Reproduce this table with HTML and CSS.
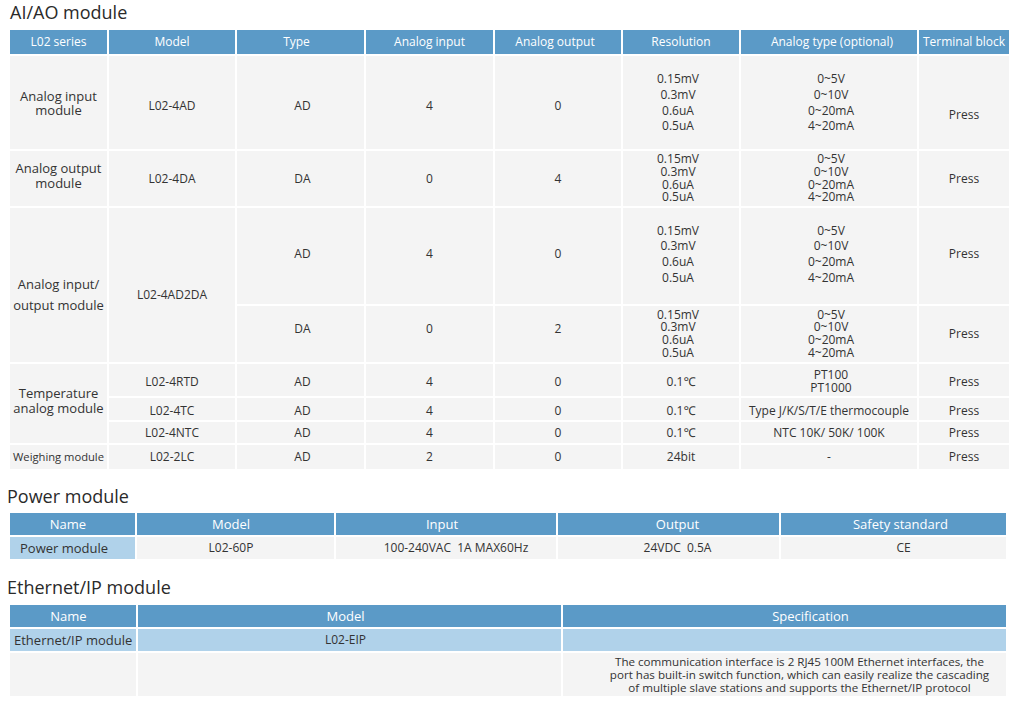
FILE: index.html
```html
<!DOCTYPE html>
<html lang="en">
<head>
<meta charset="utf-8">
<title>Modules</title>
<link rel="stylesheet" href="styles.css">
</head>
<body>
<h2 class="title first">AI/AO module</h2>
<table class="grid aio">
  <colgroup>
    <col class="c1"><col class="c2"><col class="c3"><col class="c4"><col class="c5"><col class="c6"><col class="c7"><col class="c8">
  </colgroup>
  <tr class="hd">
    <th>L02 series</th><th>Model</th><th class="sl3">Type</th><th>Analog input</th><th class="sl2">Analog output</th><th>Resolution</th><th class="sr3">Analog type (optional)</th><th>Terminal block</th>
  </tr>
  <tr class="r1">
    <td class="name lh14">Analog input<br>module</td>
    <td>L02-4AD</td><td class="sr2">AD</td><td>4</td><td>0</td>
    <td class="lines wide sl2"><div class="ln">0.15mV</div><div class="ln">0.3mV</div><div class="ln">0.6uA</div><div class="ln">0.5uA</div></td>
    <td class="lines wide sr2"><div class="ln">0~5V</div><div class="ln">0~10V</div><div class="ln">0~20mA</div><div class="ln">4~20mA</div></td>
    <td class="press">Press</td>
  </tr>
  <tr class="r2">
    <td class="name lh15">Analog output<br>module</td>
    <td>L02-4DA</td><td class="sr2">DA</td><td>0</td><td>4</td>
    <td class="lines tight sl2"><div class="ln">0.15mV</div><div class="ln">0.3mV</div><div class="ln">0.6uA</div><div class="ln">0.5uA</div></td>
    <td class="lines tight sr2"><div class="ln">0~5V</div><div class="ln">0~10V</div><div class="ln">0~20mA</div><div class="ln">4~20mA</div></td>
    <td>Press</td>
  </tr>
  <tr class="r3">
    <td class="name lh21 low" rowspan="2">Analog input/<br>output module</td>
    <td class="low" rowspan="2">L02-4AD2DA</td>
    <td class="sr2">AD</td><td>4</td><td>0</td>
    <td class="lines wide sl2"><div class="ln">0.15mV</div><div class="ln">0.3mV</div><div class="ln">0.6uA</div><div class="ln">0.5uA</div></td>
    <td class="lines wide sr2"><div class="ln">0~5V</div><div class="ln">0~10V</div><div class="ln">0~20mA</div><div class="ln">4~20mA</div></td>
    <td>Press</td>
  </tr>
  <tr class="r4">
    <td class="up sr2">DA</td><td class="up">0</td><td class="up">2</td>
    <td class="lines tight sl2"><div class="ln">0.15mV</div><div class="ln">0.3mV</div><div class="ln">0.6uA</div><div class="ln">0.5uA</div></td>
    <td class="lines tight sr2"><div class="ln">0~5V</div><div class="ln">0~10V</div><div class="ln">0~20mA</div><div class="ln">4~20mA</div></td>
    <td>Press</td>
  </tr>
  <tr class="r5">
    <td class="name lh15" rowspan="3">Temperature<br>analog module</td>
    <td>L02-4RTD</td><td class="sr2">AD</td><td>4</td><td>0</td><td>0.1℃</td>
    <td class="lines tight sr2"><div class="ln">PT100</div><div class="ln">PT1000</div></td>
    <td>Press</td>
  </tr>
  <tr class="r6">
    <td>L02-4TC</td><td class="sr2">AD</td><td>4</td><td>0</td><td>0.1℃</td><td>Type J/K/S/T/E thermocouple</td><td>Press</td>
  </tr>
  <tr class="r7">
    <td>L02-4NTC</td><td class="sr2">AD</td><td>4</td><td>0</td><td>0.1℃</td><td>NTC 10K/ 50K/ 100K</td><td>Press</td>
  </tr>
  <tr class="r8">
    <td class="name small">Weighing module</td>
    <td>L02-2LC</td><td class="sr2">AD</td><td>2</td><td>0</td><td>24bit</td><td>-</td><td>Press</td>
  </tr>
</table>

<h2 class="title section">Power module</h2>
<table class="grid power">
  <colgroup>
    <col class="p1"><col class="p2"><col class="p3"><col class="p4"><col class="p5">
  </colgroup>
  <tr class="hd2">
    <th class="sl4">Name</th><th class="sl4">Model</th><th class="sl3">Input</th><th class="sr9">Output</th><th class="sr7">Safety standard</th>
  </tr>
  <tr class="pr">
    <td class="lb left">Power module</td>
    <td class="sl4">L02-60P</td>
    <td class="sr10">100-240VAC&nbsp; 1A MAX60Hz</td>
    <td class="sr9">24VDC&nbsp; 0.5A</td>
    <td class="sr10">CE</td>
  </tr>
</table>

<h2 class="title section eth">Ethernet/IP module</h2>
<table class="grid ethernet">
  <colgroup>
    <col class="e1"><col class="e2"><col class="e3">
  </colgroup>
  <tr class="hd2">
    <th class="sl4">Name</th><th class="sl3">Model</th><th class="specth">Specification</th>
  </tr>
  <tr class="er">
    <td class="lb left tightleft">Ethernet/IP module</td>
    <td class="lb sl3">L02-EIP</td>
    <td class="lb"></td>
  </tr>
  <tr class="er2">
    <td></td>
    <td></td>
    <td class="spec"><div class="sl">The communication interface is 2 RJ45 100M Ethernet interfaces, the</div><div class="sl">port has built-in switch function, which can easily realize the cascading</div><div class="sl">of multiple slave stations and supports the Ethernet/IP protocol</div></td>
  </tr>
</table>
</body>
</html>
```

FILE: styles.css
```css
body {
  margin: 0;
  padding: 3px 0 0 8px;
  background: #ffffff;
  color: #333333;
  font-family: "Open Sans", "Noto Sans", "Noto Sans CJK SC", sans-serif;
}

.title {
  margin: 0;
  font-size: 18px;
  font-weight: 400;
  line-height: 19px;
  color: #2a2a2a;
}

.title.first {
  margin-left: 2px;
  margin-bottom: 6px;
}

.title.section {
  margin-top: 16px;
  margin-bottom: 5px;
  margin-left: -1px;
}

.title.eth {
  margin-top: 17px;
  margin-bottom: 6px;
}

.grid {
  border-collapse: collapse;
  table-layout: fixed;
}

.grid th,
.grid td {
  border: 2px solid #ffffff;
  padding: 0 2px;
  text-align: center;
  vertical-align: middle;
  font-weight: 400;
  white-space: nowrap;
  overflow: hidden;
}

.grid th {
  background: #5b9ac7;
  color: #ffffff;
}

.grid td {
  background: #f4f4f4;
  color: #333333;
}

/* horizontal nudges: shift text left (sl) or right (sr) */
.grid .sl2 { padding-left: 0; padding-right: 6px; }
.grid .sl3 { padding-left: 0; padding-right: 8px; }
.grid .sl4 { padding-left: 0; padding-right: 9px; }
.grid .sr2 { padding-left: 6px; padding-right: 2px; }
.grid .sr3 { padding-left: 8px; padding-right: 2px; }
.grid .sr7 { padding-left: 16px; padding-right: 2px; }
.grid .sr9 { padding-left: 20px; padding-right: 2px; }
.grid .sr10 { padding-left: 22px; padding-right: 2px; }

/* AI/AO table */
.aio {
  width: 1001px;
  font-size: 12px;
  line-height: 14px;
}

.aio .c1 { width: 99px; }
.aio .c2 { width: 128px; }
.aio .c3 { width: 129px; }
.aio .c4 { width: 129px; }
.aio .c5 { width: 128px; }
.aio .c6 { width: 118px; }
.aio .c7 { width: 178px; }
.aio .c8 { width: 92px; }

.aio th {
  font-size: 12px;
}

.aio .hd { height: 26px; }
.aio .r1 { height: 95px; }
.aio .r2 { height: 57px; }
.aio .r3 { height: 98px; }
.aio .r4 { height: 58px; }
.aio .r5 { height: 34px; }
.aio .r6 { height: 24px; }
.aio .r7 { height: 23px; }
.aio .r8 { height: 26px; }

.aio .name {
  font-size: 13px;
  padding: 0;
}

.aio .name.small {
  font-size: 11.2px;
}

.lh14 { line-height: 14px; }
.lh15 { line-height: 15px; }
.lh21 { line-height: 21px; }

.aio .lines.wide .ln { height: 15.7px; line-height: 15.7px; }
.aio .lines.tight .ln { height: 12.6px; line-height: 12.6px; }

.aio .r1 td { padding-top: 7px; }
.aio .r1 td.name { padding-top: 1px; }
.aio .r1 td.lines { padding-top: 0; }
.aio .r1 td.press { padding-top: 25px; }

.aio .r2 td.name { padding-bottom: 6px; }

.aio .r3 td { padding-bottom: 4px; }
.aio td.low { padding-top: 20px; padding-bottom: 0; }
.aio td.up { padding-bottom: 10px; }

.aio .r5 td { padding-top: 4px; }
.aio .r5 td.name { padding-top: 0; padding-bottom: 6px; }
.aio .r6 td { padding-top: 3px; }

/* Power table */
.power,
.ethernet {
  width: 998px;
  font-size: 12px;
  line-height: 14px;
}

.power th,
.ethernet th {
  font-size: 13px;
}

.power .p1 { width: 127px; }
.power .p2 { width: 199px; }
.power .p3 { width: 222px; }
.power .p4 { width: 223px; }
.power .p5 { width: 227px; }

.hd2 { height: 24px; }
.pr { height: 24px; }

.grid td.lb {
  background: #b0d2ea;
}

.grid td.left {
  text-align: left;
  font-size: 13px;
  padding-left: 10px;
}

.grid td.tightleft {
  padding-left: 4px;
}

/* Ethernet table */
.ethernet .e1 { width: 128px; }
.ethernet .e2 { width: 425px; }
.ethernet .e3 { width: 445px; }

.er { height: 24px; }
.er2 { height: 45px; }

.grid th.specth {
  padding-left: 54px;
  padding-right: 2px;
}

.grid td.spec {
  font-size: 11.6px;
  padding-left: 32px;
  padding-right: 2px;
}

.spec .sl {
  height: 13px;
  line-height: 13px;
}
```
